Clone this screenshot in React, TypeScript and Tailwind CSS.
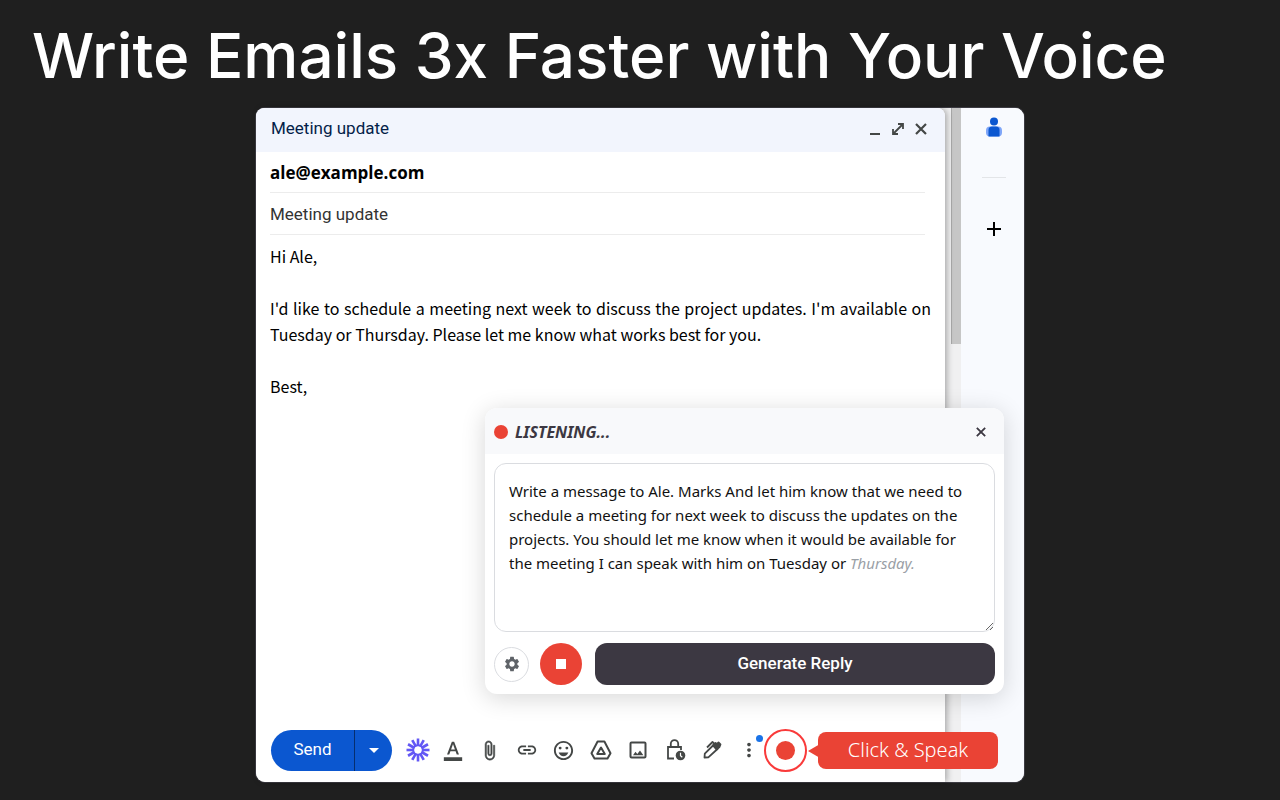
import type { ReactNode } from 'react'
import {
  MdAdd,
  MdArrowDropDown,
  MdFormatColorText,
  MdInsertLink,
  MdMoreVert,
  MdOutlineEmojiEmotions,
  MdSettings,
} from 'react-icons/md'

const BODY = `Hi Ale,

I'd like to schedule a meeting next week to discuss the project updates. I'm available on Tuesday or Thursday. Please let me know what works best for you.

Best,`

const BURST = [0, 30, 60, 90, 120, 150, 180, 210, 240, 270, 300, 330]

function BurstIcon() {
  return (
    <svg viewBox="0 0 24 24" className="size-6 shrink-0" stroke="#6257f5" strokeWidth="2.6">
      {BURST.map((a) => (
        <line key={a} x1="12" y1="0.5" x2="12" y2="8" transform={`rotate(${a} 12 12)`} />
      ))}
      <circle cx="12" cy="12" r="4.8" fill="none" strokeWidth="2" />
    </svg>
  )
}

function ClipIcon() {
  return (
    <svg viewBox="0 0 24 24" className="size-[21px]" fill="currentColor" stroke="currentColor" strokeWidth="0.6">
      <path d="M16.5 6v11.5c0 2.21-1.79 4-4 4s-4-1.79-4-4V5a2.5 2.5 0 0 1 5 0v10.5c0 .55-.45 1-1 1s-1-.45-1-1V6H10v9.5a2.5 2.5 0 0 0 5 0V5c0-2.21-1.79-4-4-4S7 2.79 7 5v12.5c0 3.04 2.46 5.5 5.5 5.5s5.5-2.46 5.5-5.5V6h-1.5z" />
    </svg>
  )
}

function DriveIcon() {
  return (
    <svg viewBox="0 0 24 24" className="size-6" fill="none" stroke="currentColor" strokeWidth="2" strokeLinejoin="round">
      <path d="M8.6 3.5h6.8L21.5 15.2l-3 5.3h-13l-3-5.3z" />
      <path d="M12 9.5L8.2 16h7.6z" />
    </svg>
  )
}

function ImageIcon() {
  return (
    <svg viewBox="0 0 24 24" className="size-6" fill="none" stroke="currentColor" strokeWidth="2">
      <rect x="4.5" y="4.5" width="15" height="15" rx="1" />
      <path d="M7 17.2l2.5-3.4 1.8 2.2 2.7-3.6 3.4 4.8z" fill="currentColor" stroke="none" />
    </svg>
  )
}

function LockClockIcon() {
  return (
    <svg viewBox="0 0 24 24" className="size-6" fill="none" stroke="currentColor" strokeWidth="1.8">
      <path d="M11 20.5H5V9h13v3" />
      <path d="M7.8 9V5.800a3.7 3.7 0 0 1 7.4 0V9" />
      <circle cx="17.5" cy="17.500" r="4.8" fill="currentColor" stroke="none" />
      <path d="M17.5 14.8v3l1.8 1.5" stroke="#fff" strokeWidth="1.2" />
    </svg>
  )
}

function PenIcon() {
  return (
    <svg viewBox="0 0 24 24" className="size-6" fill="none" stroke="currentColor" strokeWidth="1.8" strokeLinejoin="round">
      <path d="M4.5 19.5l.3-3.8 8.7-8.7 4 4-9.200 8.300z" />
      <path d="M13 7.500l2.500-2.500 1.500 1 1.500-1.500 2 2-1 2.500-3 2.500z" fill="currentColor" />
      <path d="M7 9.500L12.500 4l1.800 1.600" />
    </svg>
  )
}

function ExpandIcon() {
  return (
    <svg viewBox="0 0 14 14" className="size-[14px]" fill="none" stroke="currentColor" strokeWidth="1.8">
      <path d="M2 12L12 2M7 2h5v5M2 7v5h5" />
    </svg>
  )
}

function CrossIcon({ className }: { className: string }) {
  return (
    <svg viewBox="0 0 12 12" className={className} fill="none" stroke="currentColor" strokeWidth="2.2">
      <path d="M1 1l10 10M11 1L1 11" />
    </svg>
  )
}

function PersonIcon() {
  return (
    <svg viewBox="0 0 20 22" className="h-[22px] w-5">
      <circle cx="10" cy="5.5" r="4" fill="#0b57d0" />
      <rect x="2" y="10.5" width="16" height="10" rx="4" fill="#7fa6f8" />
      <path d="M4.500 14q0-3.500 3.500-3.500h4q3.500 0 3.500 3.500v6.500h-11z" fill="#0b57d0" />
    </svg>
  )
}

const TOOLS: { name: string; icon: ReactNode }[] = [
  { name: 'Formatting', icon: <MdFormatColorText size={22} /> },
  { name: 'Attach file', icon: <ClipIcon /> },
  { name: 'Insert link', icon: <MdInsertLink size={22} /> },
  { name: 'Insert emoji', icon: <MdOutlineEmojiEmotions size={23} /> },
  { name: 'Insert from Drive', icon: <DriveIcon /> },
  { name: 'Insert photo', icon: <ImageIcon /> },
  { name: 'Confidential mode', icon: <LockClockIcon /> },
  { name: 'Signature', icon: <PenIcon /> },
]

function VoicePanel() {
  return (
    <section className="absolute right-5 bottom-[88px] z-20 w-[519px] max-w-full overflow-hidden rounded-xl bg-white shadow-[0_4px_24px_rgba(0,0,0,0.16)]">
      <header className="flex h-[46px] items-center bg-[#f8f9fb] px-[9px] pt-[2px]">
        <span className="size-[14px] rounded-full bg-[#ea4335]" />
        <h2 className="ml-[7px] flex-1 font-['Noto_Sans'] text-base font-bold text-[#3c3842] italic">LISTENING...</h2>
        <button aria-label="Close panel" className="mr-1 flex size-5 items-center justify-center text-[#3c3842]">
          <CrossIcon className="size-[10px]" />
        </button>
      </header>
      <div className="p-[9px]">
        <div
          role="textbox"
          aria-label="Transcript"
          aria-multiline="true"
          contentEditable
          suppressContentEditableWarning
          className="h-[169px] resize overflow-auto rounded-xl border border-[#dadce0] py-[15px] pr-5 pl-[14px] font-['Noto_Sans'] text-[15px] leading-6 text-[#111]"
        >
          Write a message to Ale. Marks And let him know that we need to schedule a meeting for next week to discuss the
          updates on the projects. You should let me know when it would be available for the meeting I can speak with him
          on Tuesday or <em className="text-[#9aa0a6]">Thursday.</em>
        </div>
        <div className="mt-[11px] flex items-center">
          <button
            aria-label="Settings"
            className="flex size-[35px] items-center justify-center rounded-full border border-[#dadce0] text-[#5f6368]"
          >
            <MdSettings size={18} />
          </button>
          <button aria-label="Stop" className="ml-[11px] flex size-[42px] items-center justify-center rounded-full bg-[#ea4335]">
            <span className="size-[10px] bg-white" />
          </button>
          <button className="ml-[13px] h-[42px] flex-1 rounded-xl bg-[#3c3842] font-['Roboto'] text-[17px] font-medium text-white">
            Generate Reply
          </button>
        </div>
      </div>
    </section>
  )
}

function Toolbar() {
  return (
    <footer className="flex h-[64px] items-center pl-[15px] text-[#444746]">
      <div className="flex h-[41px] overflow-hidden rounded-full bg-[#0b57d0] text-white">
        <button className="w-[84px] border-r border-[#062e6f] font-['Roboto'] text-[17px]">Send</button>
        <button aria-label="More send options" className="flex w-[37px] items-center justify-center">
          <MdArrowDropDown size={24} />
        </button>
      </div>
      <div className="ml-[10px] flex">
        <button aria-label="Assistant" className="flex h-10 w-8 items-center justify-center">
          <BurstIcon />
        </button>
        {TOOLS.map((t) => (
          <button key={t.name} aria-label={t.name} className="flex h-10 w-[37px] items-center justify-center">
            {t.icon}
          </button>
        ))}
        <button aria-label="More options" className="relative flex h-10 w-[37px] items-center justify-center">
          <MdMoreVert size={22} />
          <span className="absolute top-[5px] right-1 size-[7px] rounded-full bg-[#1a73e8]" />
        </button>
      </div>
      <div className="relative -ml-[3px]">
        <button
          aria-label="Record"
          className="flex size-[43px] items-center justify-center rounded-full border-2 border-[#f93a3a] bg-white"
        >
          <span className="size-[19px] rounded-full bg-[#ea4335]" />
        </button>
        <div
          role="tooltip"
          className="absolute top-[3px] left-[54px] z-10 flex h-[37px] w-[180px] items-center justify-center rounded-lg bg-[#ea4335] font-['Noto_Sans'] text-xl font-light text-white"
        >
          <svg viewBox="0 0 12 14" className="absolute top-3 -left-[10px] h-[14px] w-3">
            <path d="M0 7L12 0v14z" fill="#ea4335" />
          </svg>
          Click &amp; Speak
        </div>
      </div>
    </footer>
  )
}

export default function App() {
  return (
    <div className="min-h-screen bg-[#1f1f1f] pb-[18px]">
      <h1 className="px-8 pt-3 font-['Inter'] text-[62px] leading-[88px] font-medium whitespace-nowrap text-white">
        Write Emails 3x Faster with Your Voice
      </h1>
      <main className="relative mx-auto mt-2 w-3/5 min-w-[768px] rounded-[9px] ring-1 ring-[#3c3b42]">
        <div className="flex rounded-[9px] bg-[#f0f0f1]">
          <form className="relative z-10 flex-1 rounded-tl-[9px] rounded-tr-lg rounded-bl-[9px] bg-white shadow-[2px_0_6px_rgba(0,0,0,0.3)]">
            <header className="flex h-11 items-center rounded-t-lg bg-[#f2f5fd] pr-[14px] pb-[2px] pl-[15px]">
              <h2 className="flex-1 font-['Roboto'] text-[17px] text-[#041e49]">Meeting update</h2>
              <div className="flex gap-[3px] text-[#444746]">
                <button type="button" aria-label="Minimize" className="flex size-5 items-end justify-center pb-[4px]">
                  <span className="h-[2px] w-[10px] bg-[#444746]" />
                </button>
                <button type="button" aria-label="Full screen" className="flex size-5 items-center justify-center">
                  <ExpandIcon />
                </button>
                <button type="button" aria-label="Close" className="flex size-5 items-center justify-center">
                  <CrossIcon className="size-3" />
                </button>
              </div>
            </header>
            <div className="mr-5 ml-[14px]">
              <input
                aria-label="To"
                defaultValue="ale@example.com"
                className="block h-[41px] w-full border-b border-[#ececec] font-['Open_Sans'] text-[17px] font-bold text-black outline-none"
              />
              <input
                aria-label="Subject"
                defaultValue="Meeting update"
                className="block h-[42px] w-full border-b border-[#ececec] font-['Roboto'] text-[17px] text-[#333] outline-none"
              />
            </div>
            <textarea
              aria-label="Message body"
              defaultValue={BODY}
              className="block h-[483px] w-full resize-none overflow-hidden pt-2 pr-[14px] pl-[14px] text-justify font-['Noto_Sans_CJK_SC',sans-serif] text-base leading-[26px] text-black outline-none"
            />
            <Toolbar />
          </form>
          <div className="w-4 pl-[6px]">
            <div className="h-[236px] border-l border-[#a8a8a8] bg-[#c6c6c6]" />
          </div>
          <aside className="flex w-[63px] flex-col items-center rounded-r-[9px] bg-[#f8fafe] pt-2 pl-[2px]">
            <button aria-label="Contacts">
              <PersonIcon />
            </button>
            <hr className="mt-[39px] w-6 border-[#e3e5e8]" />
            <button aria-label="Get add-ons" className="mt-[39px] text-black">
              <MdAdd size={24} />
            </button>
          </aside>
        </div>
        <VoicePanel />
      </main>
    </div>
  )
}
